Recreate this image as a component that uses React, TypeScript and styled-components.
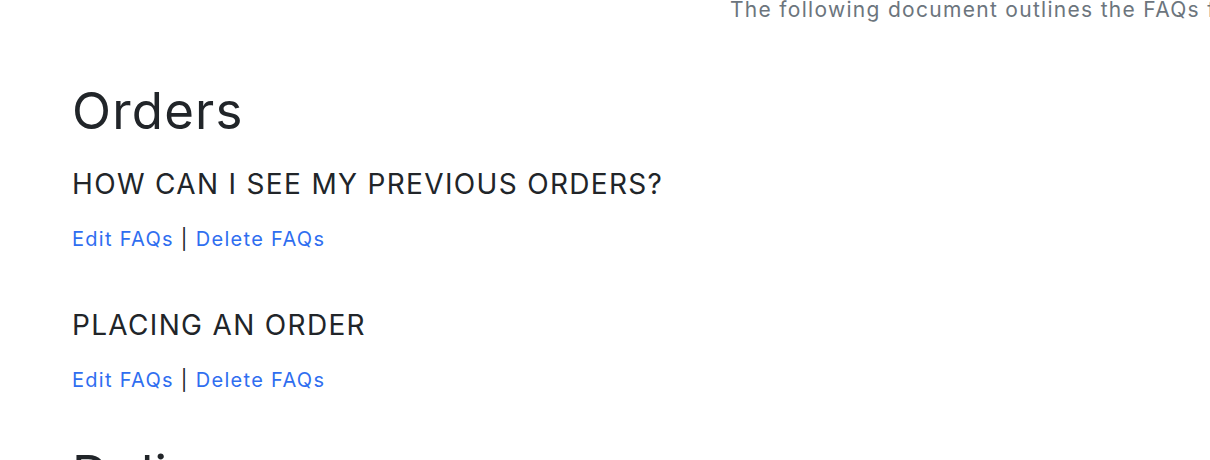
import React from "react";
import styled, { createGlobalStyle } from "styled-components";

const GlobalStyle = createGlobalStyle`
  html, body {
    margin: 0;
    padding: 0;
    background: #ffffff;
    overflow: hidden;
  }
  body {
    font-family: Inter, "Liberation Sans", sans-serif;
    color: #212529;
  }
`;

const Page = styled.div`
  width: 1210px;
  height: 460px;
  overflow: hidden;
`;

const Lead = styled.p`
  margin: -5px 0 0 730px;
  font-size: 21px;
  line-height: 30px;
  font-weight: 400;
  letter-spacing: 1.3px;
  color: #6c757d;
  white-space: nowrap;
`;

const Content = styled.main`
  padding: 0 72px;
`;

const Section = styled.section<{ $first?: boolean }>`
  margin-top: ${(p) => (p.$first ? "56px" : "49px")};
`;

const SectionTitle = styled.h1`
  margin: 0 0 26px;
  font-size: 51px;
  line-height: 60px;
  font-weight: 400;
  letter-spacing: 1.2px;
  color: #212529;
`;

const Question = styled.div`
  margin-bottom: 54px;
  &:last-child {
    margin-bottom: 0;
  }
`;

const QuestionTitle = styled.h3`
  margin: 0 0 23px;
  font-size: 28px;
  line-height: 34px;
  font-weight: 400;
  letter-spacing: 1.33px;
  color: #212529;
`;

const Actions = styled.p`
  margin: 0;
  font-size: 20px;
  line-height: 30px;
  letter-spacing: 1.3px;
  color: #212529;
`;

const ActionLink = styled.a`
  color: #2f6ef0;
  text-decoration: none;
`;

const sections = [
  {
    title: "Orders",
    questions: ["HOW CAN I SEE MY PREVIOUS ORDERS?", "PLACING AN ORDER"],
  },
  {
    title: "Delivery",
    questions: ["WHEN WILL MY ORDER ARRIVE?"],
  },
];

export default function App() {
  return (
    <Page>
      <GlobalStyle />
      <Lead>The following document outlines the FAQs for our customers.</Lead>
      <Content>
        {sections.map((s, i) => (
          <Section key={s.title} $first={i === 0}>
            <SectionTitle>{s.title}</SectionTitle>
            {s.questions.map((q) => (
              <Question key={q}>
                <QuestionTitle>{q}</QuestionTitle>
                <Actions>
                  <ActionLink href="#">Edit FAQs</ActionLink> |{" "}
                  <ActionLink href="#">Delete FAQs</ActionLink>
                </Actions>
              </Question>
            ))}
          </Section>
        ))}
      </Content>
    </Page>
  );
}
